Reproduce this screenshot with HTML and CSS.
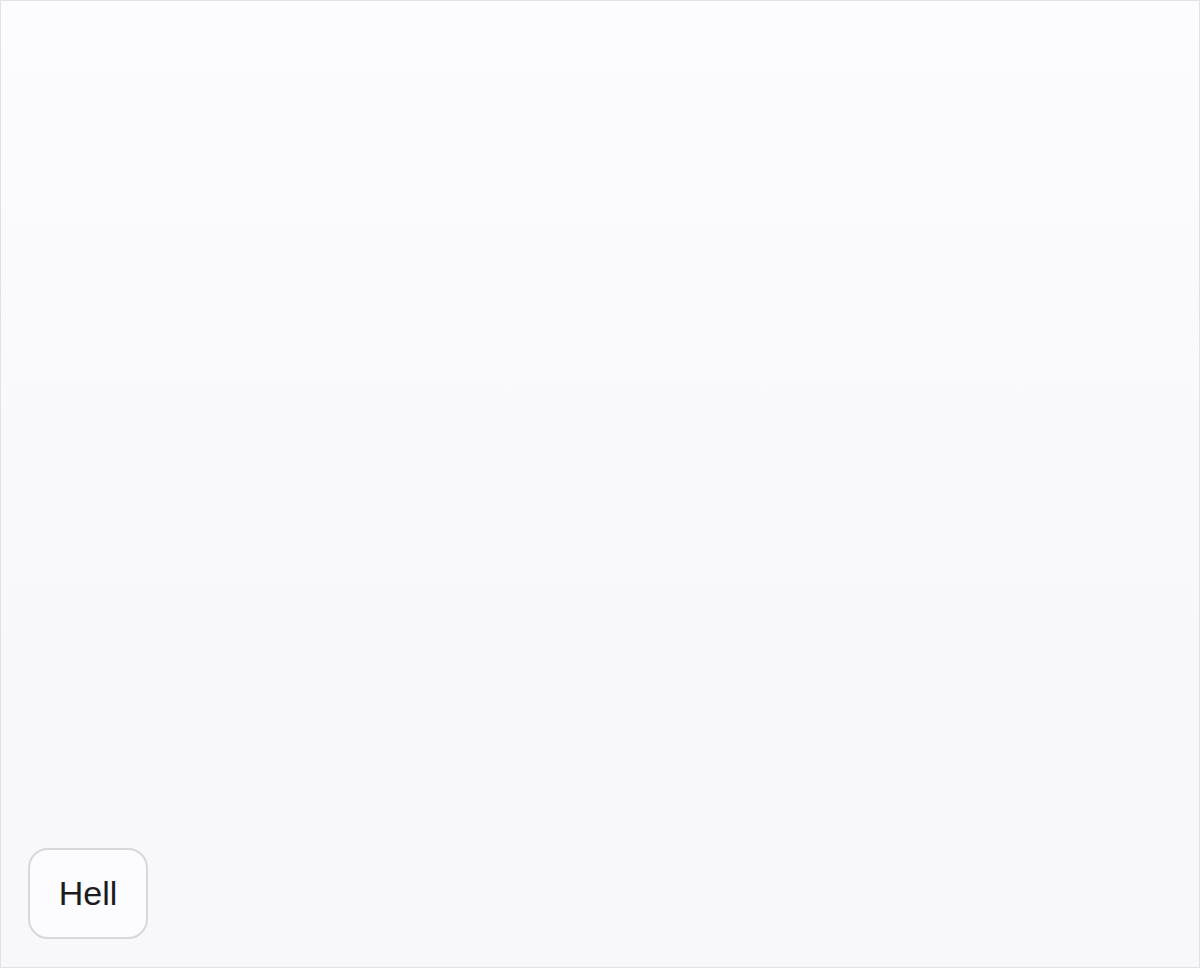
FILE: index.html
```
<!DOCTYPE html>
<html lang="en">
<head>
    <meta charset="UTF-8">
    <meta name="viewport" content="width=device-width, initial-scale=1.0">
    <title>Document</title>
    <link rel="stylesheet" href="styles.css">
</head>
<body>
    <section class="stage">
        <button class="bubble">Hell</button>
    </section>
</body>
</html>
```
FILE: styles.css
```
*{
    margin:0;
    padding:0;
    box-sizing:border-box;
}
body{
    font-family:Inter, "Liberation Sans", sans-serif;
    background-color:rgb(248, 247, 249);
}
.stage{
    width:100%;
    height:968px;
    border:1px solid rgb(226, 225, 228);
    background:linear-gradient(to bottom, rgb(252, 251, 253) 0%, rgb(250, 249, 251) 30%, rgb(248, 247, 249) 70%, rgb(248, 247, 249) 100%);
    display:flex;
    flex-direction:column;
    justify-content:flex-end;
    align-items:flex-start;
    padding:0 0 28px 27px;
}
.bubble{
    width:120px;
    height:91px;
    border:2px solid rgb(216, 215, 218);
    border-radius:20px;
    background-color:rgb(252, 251, 253);
    color:rgb(28, 28, 30);
    font-family:"Liberation Sans", Inter, sans-serif;
    font-size:34px;
    display:flex;
    justify-content:center;
    align-items:center;
}
```
